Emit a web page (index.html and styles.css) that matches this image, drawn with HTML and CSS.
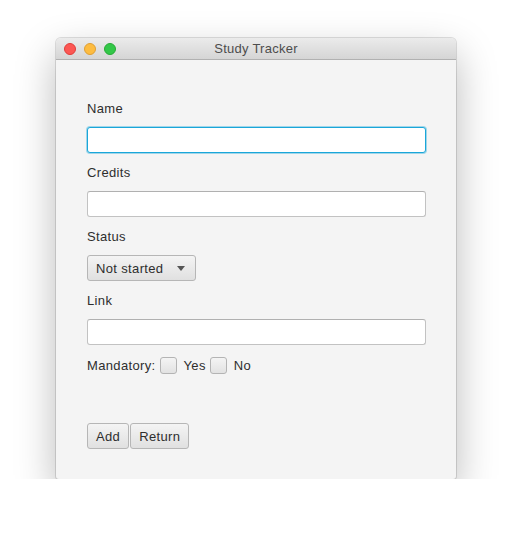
FILE: index.html
```html
<!DOCTYPE html>
<html>
<head>
<meta charset="utf-8">
<link rel="stylesheet" href="styles.css">
</head>
<body>
<div class="window">
  <div class="titlebar">
    <div class="lights">
      <span class="light red"></span>
      <span class="light yellow"></span>
      <span class="light green"></span>
    </div>
    <div class="title">Study Tracker</div>
  </div>
  <div class="content">
    <div class="label">Name</div>
    <div class="input focused"></div>
    <div class="label">Credits</div>
    <div class="input"></div>
    <div class="label">Status</div>
    <div class="combo"><span>Not started</span><span class="arrow"></span></div>
    <div class="label">Link</div>
    <div class="input"></div>
    <div class="mandatory">
      <span>Mandatory:</span>
      <span class="check"></span><span class="opt">Yes</span>
      <span class="check"></span><span class="opt">No</span>
    </div>
    <div class="buttons">
      <div class="btn">Add</div>
      <div class="btn">Return</div>
    </div>
  </div>
</div>
</body>
</html>
```
FILE: styles.css
```css
html, body { margin: 0; padding: 0; background: #ffffff; }
body { font-family: "Liberation Sans", Arial, sans-serif; font-size: 13px; color: #2e2e2e; letter-spacing: 0.35px; }
.window {
  margin: 38px 0 0 56px;
  width: 400px;
  height: 441px;
  background: #f4f4f4;
  border-radius: 5px 5px 3px 3px;
  box-shadow: 0 0 0 1px rgba(0,0,0,0.12), 0 16px 40px rgba(0,0,0,0.28);
  overflow: hidden;
  display: flex;
  flex-direction: column;
}
.titlebar {
  height: 21px;
  flex: none;
  background: linear-gradient(#ebebeb, #d5d5d5);
  border-bottom: 1px solid #b1b1b1;
  position: relative;
  display: flex;
  align-items: center;
  justify-content: center;
}
.lights { position: absolute; left: 8px; top: 5px; display: flex; gap: 8px; }
.light { width: 12px; height: 12px; border-radius: 50%; display: block; box-sizing: border-box; }
.red { background: #fc5753; border: 1px solid #df3d39; }
.yellow { background: #fdbc40; border: 1px solid #de9f34; }
.green { background: #33c748; border: 1px solid #27aa35; }
.title { color: #4d4d4d; font-size: 13px; letter-spacing: 0.25px; }
.content { padding: 40px 30px 30px 31px; display: flex; flex-direction: column; flex: 1; }
.label { line-height: 17px; height: 17px; margin-bottom: 10px; }
.input {
  height: 26px; box-sizing: border-box; background: #fff;
  border: 1px solid #c2c2c2; border-top-color: #b0b0b0; border-radius: 3px;
  margin-bottom: 11px;
}
.input.focused { border: 1px solid #1aa6d9; box-shadow: 0 0 0 1px rgba(3,158,211,0.35); }
.combo {
  width: 109px; height: 26px; box-sizing: border-box;
  border: 1px solid #b6b6b6; border-radius: 3px;
  background: linear-gradient(#f4f4f4, #e0e0e0);
  display: flex; align-items: center; justify-content: space-between;
  padding: 0 10px 0 8px; margin-bottom: 11px;
}
.arrow { width: 0; height: 0; border-left: 4.5px solid transparent; border-right: 4.5px solid transparent; border-top: 5px solid #555; }
.mandatory { display: flex; align-items: center; height: 18px; margin-top: 0; }
.check {
  width: 17px; height: 17px; box-sizing: border-box;
  border: 1px solid #b4b4b4; border-radius: 3px;
  background: linear-gradient(#f4f4f4, #e2e2e2);
  margin-left: 4px; margin-right: 7px;
}
.buttons { margin-top: auto; display: flex; gap: 1px; }
.btn {
  height: 26px; box-sizing: border-box; padding: 0 8px;
  border: 1px solid #b6b6b6; border-radius: 3px;
  background: linear-gradient(#f4f4f4, #e0e0e0);
  display: flex; align-items: center;
}
```
